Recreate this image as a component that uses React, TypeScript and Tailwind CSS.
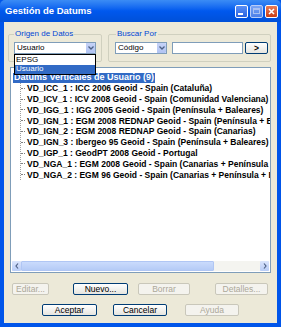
import React from 'react';

const items = [
  'VD_ICC_1 : ICC 2006 Geoid - Spain (Cataluña)',
  'VD_ICV_1 : ICV 2008 Geoid - Spain (Comunidad Valenciana)',
  'VD_IGG_1 : IGG 2005 Geoid - Spain (Península + Baleares)',
  'VD_IGN_1 : EGM 2008 REDNAP Geoid - Spain (Península + Baleares)',
  'VD_IGN_2 : EGM 2008 REDNAP Geoid - Spain (Canarias)',
  'VD_IGN_3 : Ibergeo 95 Geoid - Spain (Península + Baleares)',
  'VD_IGP_1 : GeodPT 2008 Geoid - Portugal',
  'VD_NGA_1 : EGM 2008 Geoid - Spain (Canarias + Península + Baleares)',
  'VD_NGA_2 : EGM 96 Geoid - Spain (Canarias + Península + Baleares)',
];

const font = { fontFamily: "Tahoma, 'Liberation Sans', Arial, sans-serif" };

function XpButton({ label, disabled, className }: { label: string; disabled?: boolean; className?: string }) {
  return (
    <div
      className={`h-[12px] flex items-center justify-center rounded-[2px] text-[8.5px] leading-none ${
        disabled
          ? 'border border-[#c9c7ba] bg-[#f4f3ee] text-[#aca899]'
          : 'border border-[#003c74] bg-gradient-to-b from-white to-[#e6e5df] text-black'
      } ${className ?? ''}`}
    >
      {label}
    </div>
  );
}

function ComboArrow() {
  return (
    <div className="w-[10px] h-full flex items-center justify-center bg-gradient-to-b from-[#c6d3f7] to-[#b1c4f3] border-l border-white rounded-[1px]">
      <svg width="6" height="4" viewBox="0 0 6 4">
        <path d="M0.5 0.5 L3 3 L5.5 0.5" stroke="#4d6185" strokeWidth="1.3" fill="none" />
      </svg>
    </div>
  );
}

export default function App() {
  return (
    <div className="w-[281px] h-[327px] flex flex-col bg-[#0055ea] overflow-hidden" style={font}>
      {/* title bar */}
      <div className="h-[22px] shrink-0 flex items-center pl-[5px] pr-[3px] rounded-t-[5px] bg-gradient-to-b from-[#3b8cf5] via-[#0058ee] to-[#0050d8]">
        <span className="flex-1 text-white font-bold text-[9.5px] leading-none">Gestión de Datums</span>
        <div className="flex gap-[2px]">
          <div className="w-[13px] h-[13px] rounded-[2px] border border-white bg-gradient-to-b from-[#5a8ff5] to-[#2a63e0] flex items-end justify-start p-[2px]">
            <div className="w-[5px] h-[2px] bg-white" />
          </div>
          <div className="w-[13px] h-[13px] rounded-[2px] border border-[#b8cdf8] bg-gradient-to-b from-[#7aa5f5] to-[#4c7fe8] flex items-center justify-center">
            <div className="w-[7px] h-[6px] border border-[#a9c1f3] border-t-2" />
          </div>
          <div className="w-[13px] h-[13px] rounded-[2px] border border-white bg-gradient-to-b from-[#e97c56] to-[#c93c12] flex items-center justify-center">
            <svg width="7" height="7" viewBox="0 0 7 7">
              <path d="M1 1 L6 6 M6 1 L1 6" stroke="white" strokeWidth="1.6" />
            </svg>
          </div>
        </div>
      </div>

      {/* client area */}
      <div className="flex-1 mx-[4px] mb-[4px] bg-[#ece9d8] flex flex-col relative">
        <div className="flex gap-[6px] pl-[4px] pt-[8px] pr-[7px] h-[40px]">
          <fieldset className="w-[94px] border border-[#d0d0bf] rounded-[2px] px-[5px]">
            <legend className="text-[8px] text-[#0046d5] px-[1px] leading-none">Origen de Datos</legend>
            <div className="relative mt-[4px] h-[12px] w-[82px] bg-white border border-[#7f9db9] flex items-center">
              <span className="flex-1 pl-[2px] text-[8px] leading-none">Usuario</span>
              <ComboArrow />
              {/* open dropdown */}
              <div className="absolute left-[-1px] top-[11px] w-[82px] bg-white border border-black z-10 text-[8px] leading-none">
                <div className="h-[9.5px] flex items-center pl-[1px]">EPSG</div>
                <div className="h-[9.5px] flex items-center pl-[1px] bg-[#316ac5] text-white">Usuario</div>
              </div>
            </div>
          </fieldset>
          <fieldset className="flex-1 border border-[#d0d0bf] rounded-[2px] pl-[6px] pr-[2px]">
            <legend className="text-[8px] text-[#0046d5] px-[1px] ml-[1px] leading-none">Buscar Por</legend>
            <div className="flex items-center mt-[4px] h-[12px]">
              <div className="h-[12px] w-[52px] bg-white border border-[#7f9db9] flex items-center">
                <span className="flex-1 pl-[2px] text-[8px] leading-none">Código</span>
                <ComboArrow />
              </div>
              <div className="ml-[5px] h-[12px] w-[71px] bg-white border border-[#7f9db9]" />
              <XpButton label=">" className="ml-[2px] w-[23px] font-bold" />
            </div>
          </fieldset>
        </div>

        {/* tree list */}
        <div className="mx-[6px] mt-[5px] h-[206px] border border-[#7f9db9] bg-white flex flex-col overflow-hidden">
          <div className="flex-1 pt-[4px] overflow-hidden">
            <div className="ml-[2px] h-[11px] flex items-center">
              <span className="bg-[#316ac5] text-white font-bold text-[9px] leading-none px-[1px] h-[10px] flex items-center whitespace-nowrap">
                Datums Verticales de Usuario (9)
              </span>
            </div>
            <div className="ml-[9px] border-l border-dotted border-[#a0a0a0]">
              {items.map((t, i) => (
                <div key={i} className="h-[10.8px] flex items-center whitespace-nowrap">
                  <div className="w-[4px] border-t border-dotted border-[#808080] mr-[2px] shrink-0" />
                  <span className="font-bold text-[8.5px] leading-none text-black">{t}</span>
                </div>
              ))}
            </div>
          </div>
          {/* horizontal scrollbar */}
          <div className="h-[10px] shrink-0 flex mx-[1px] mb-[1px] bg-[#f4f4f0]">
            <div className="w-[9px] bg-gradient-to-b from-[#dbe5fc] to-[#b9cdf7] rounded-[1px] flex items-center justify-center">
              <svg width="4" height="6" viewBox="0 0 4 6"><path d="M3 0.5 L1 3 L3 5.5" stroke="#4d6185" strokeWidth="1.2" fill="none" /></svg>
            </div>
            <div className="w-[193px] bg-gradient-to-b from-[#cadbfc] to-[#b5cbf6] rounded-[1px] border border-[#b0c6f4]" />
            <div className="flex-1" />
            <div className="w-[9px] bg-gradient-to-b from-[#dbe5fc] to-[#b9cdf7] rounded-[1px] flex items-center justify-center">
              <svg width="4" height="6" viewBox="0 0 4 6"><path d="M1 0.5 L3 3 L1 5.5" stroke="#4d6185" strokeWidth="1.2" fill="none" /></svg>
            </div>
          </div>
        </div>

        {/* buttons */}
        <div className="flex mt-[10px] pl-[8px]">
          <XpButton label="Editar..." disabled className="w-[37px]" />
          <XpButton label="Nuevo..." className="w-[55px] ml-[24px]" />
          <XpButton label="Borrar" disabled className="w-[52px] ml-[10px]" />
          <XpButton label="Detalles..." disabled className="w-[53px] ml-[25px]" />
        </div>
        <div className="flex mt-[9px] pl-[38px]">
          <XpButton label="Aceptar" className="w-[55px]" />
          <XpButton label="Cancelar" className="w-[54px] ml-[16px]" />
          <XpButton label="Ayuda" disabled className="w-[54px] ml-[18px]" />
        </div>
      </div>
    </div>
  );
}
